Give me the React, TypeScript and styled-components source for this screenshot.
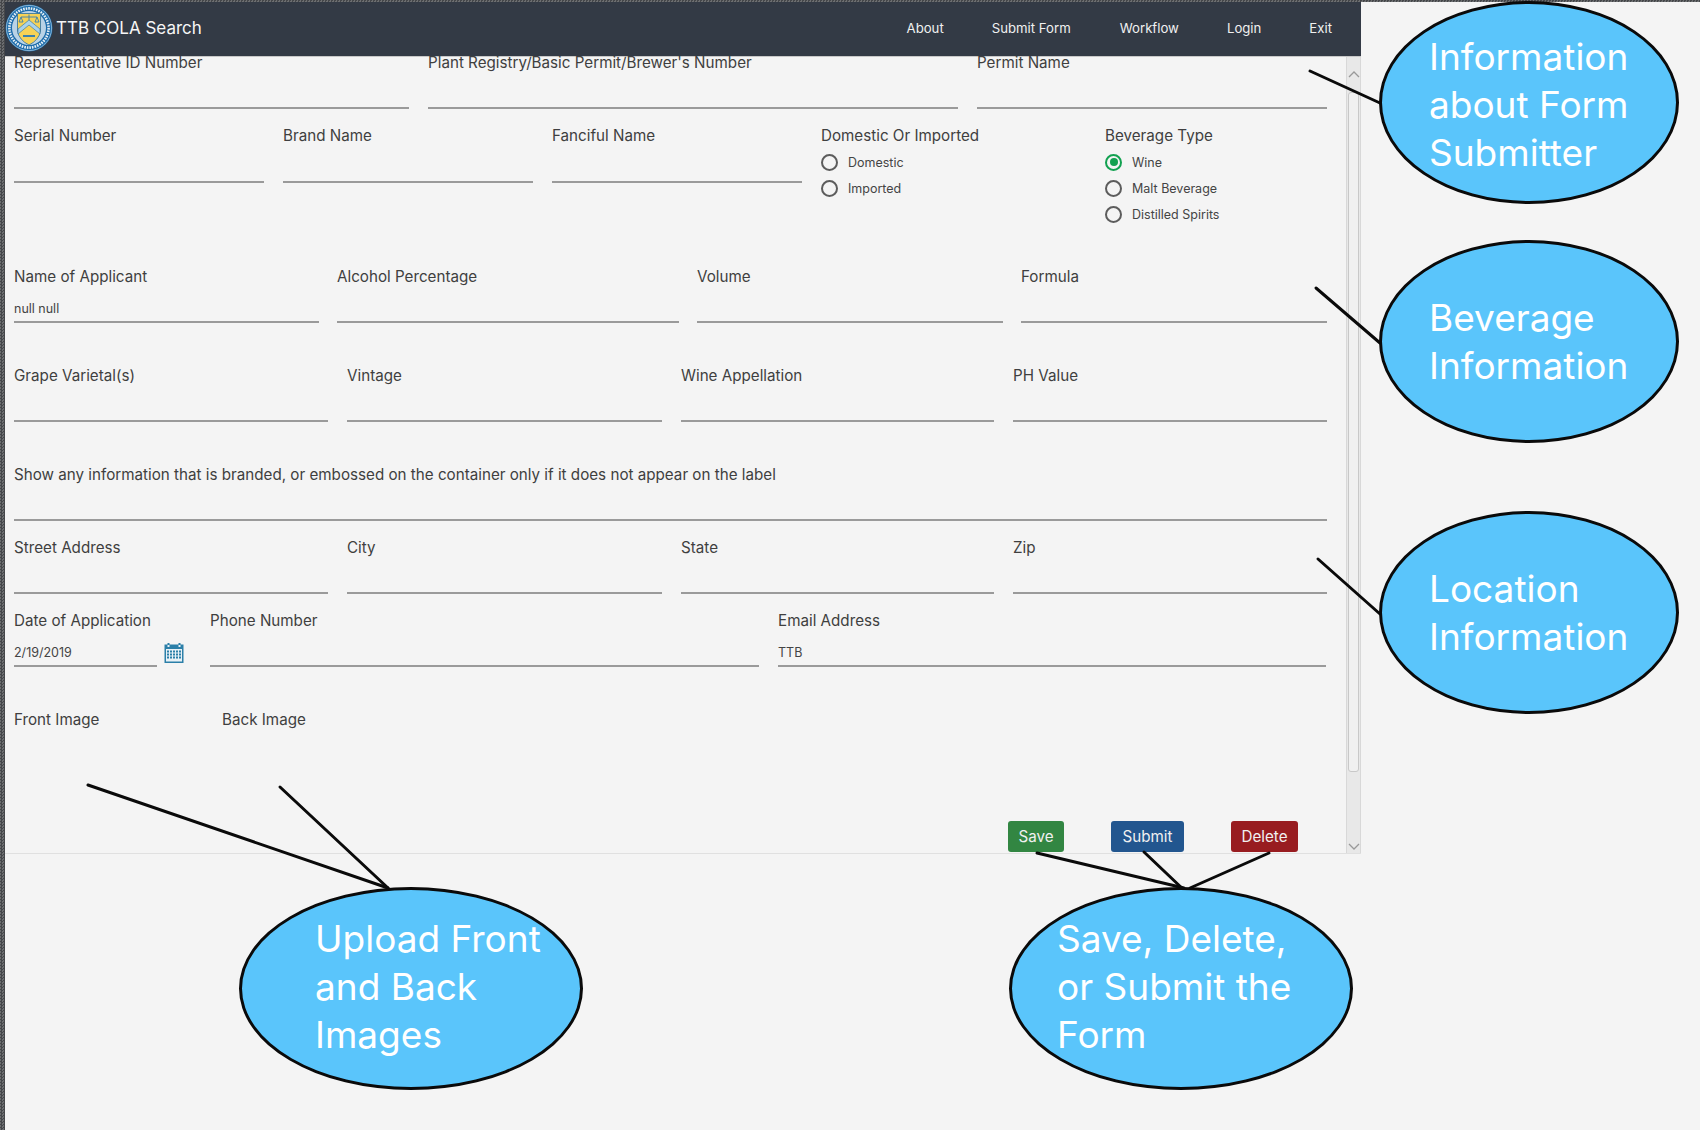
import styled, { createGlobalStyle } from "styled-components"

const GlobalStyle = createGlobalStyle`
    html, body {
        margin: 0;
        padding: 0;
        width: 1700px;
        height: 1130px;
        overflow: hidden;
        background: #f4f4f4;
        font-family: Inter, "Liberation Sans", sans-serif;
    }
`

// the reference has a transparency checker showing along the top and left edge
const Page = styled.div`
    width: 1700px;
    height: 1130px;
    box-sizing: border-box;
    padding: 2px 0 0 5px;
    display: flex;
    background: repeating-conic-gradient(#45474a 0 25%, #6c6e70 0 50%) 0 0 / 3px 3px;
`

const Canvas = styled.div`
    position: relative;
    flex: 1;
    background: #f4f4f4;
`

const Window = styled.div`
    width: 1356px;
    height: 851px;
    display: flex;
    flex-direction: column;
    border-bottom: 1px solid #e0e0e0;
`

const NavBar = styled.header`
    height: 55px;
    flex: none;
    display: flex;
    align-items: center;
    background: #333a45;
    color: #f4f4f4;
    border-bottom: 1px solid #c8c8c8;
    box-sizing: border-box;
    padding-bottom: 2px;
`

const Brand = styled.div`
    display: flex;
    align-items: center;
    gap: 3px;
    flex: 1;
    font-size: 17px;
    color: #f6f6f6;
`

const NavLink = styled.a<{ $gap: number }>`
    font-size: 13.2px;
    color: #f0f0f0;
    margin-right: ${({ $gap }) => $gap}px;
`

const Body = styled.div`
    flex: 1;
    display: flex;
    min-height: 0;
`

const Form = styled.form`
    flex: 1;
    box-sizing: border-box;
    padding: 0 19px 0 9px;
    position: relative;
`

const Row = styled.div<{ $cols: string; $height: number; $gap?: number }>`
    display: grid;
    grid-template-columns: ${({ $cols }) => $cols};
    column-gap: ${({ $gap }) => $gap ?? 19}px;
    height: ${({ $height }) => $height}px;
`

const Field = styled.div<{ $line?: number }>`
    height: ${({ $line }) => $line ?? 52}px;
    box-sizing: border-box;
    border-bottom: 2px solid #9a9a9a;
    position: relative;
`

const Label = styled.div`
    font-size: 15.2px;
    line-height: 18px;
    margin-top: -3px;
    color: #3f3f3f;
    white-space: nowrap;
`

const Value = styled.div`
    font-size: 12.5px;
    color: #444;
    position: absolute;
    left: 0;
    bottom: 5px;
`

const Group = styled.div`
    display: flex;
    flex-direction: column;
`

const RadioRow = styled.div`
    display: flex;
    align-items: center;
    height: 26px;
    gap: 10px;
    font-size: 12.5px;
    color: #444;
`

const RadioGroup = styled.div`
    margin-top: 4px;
`

const Radio = styled.span<{ $on?: boolean }>`
    width: 17px;
    height: 17px;
    box-sizing: border-box;
    border-radius: 50%;
    border: 2px solid ${({ $on }) => ($on ? "#12a150" : "#5c5c5c")};
    display: flex;
    align-items: center;
    justify-content: center;
    &::after {
        content: "";
        display: ${({ $on }) => ($on ? "block" : "none")};
        width: 8px;
        height: 8px;
        border-radius: 50%;
        background: #12a150;
    }
`

const DateWrap = styled.div`
    display: flex;
    align-items: flex-end;
    gap: 7px;
    margin-top: 3px;
`

const DateField = styled(Field)`
    width: 143px;
    flex: none;
`

const CalendarSlot = styled.span`
    display: flex;
    margin-bottom: 4px;
`

const Actions = styled.div`
    display: flex;
    height: 31px;
    margin: 0 29px 0 0;
    justify-content: flex-end;
    gap: 47px;
`

const Action = styled.button<{ $bg: string; $width: number }>`
    width: ${({ $width }) => $width}px;
    height: 31px;
    border: none;
    padding: 0;
    border-radius: 3px;
    background: ${({ $bg }) => $bg};
    color: #f0f0f0;
    font-family: inherit;
    font-size: 15.2px;
`

const Scroll = styled.div`
    width: 15px;
    flex: none;
    display: flex;
    flex-direction: column;
    align-items: center;
    background: #e8e8e8;
    border-left: 1px solid #d8d8d8;
    border-right: 1px solid #d8d8d8;
    box-sizing: border-box;
`

const ScrollArrow = styled.div<{ $height: number }>`
    height: ${({ $height }) => $height}px;
    flex: none;
    display: flex;
    align-items: center;
    color: #999;
`

const ScrollThumb = styled.div`
    width: 11px;
    height: 680px;
    flex: none;
    background: #f0f0f0;
    border: 1px solid #c8c8c8;
    border-radius: 3px;
    box-sizing: border-box;
`

const ScrollGap = styled.div`
    flex: 1;
`

const Bubble = styled.div<{ $x: number; $y: number; $w: number; $pad: number; $shift?: number }>`
    position: absolute;
    left: ${({ $x }) => $x - 5}px;
    top: ${({ $y }) => $y - 2}px;
    width: ${({ $w }) => $w}px;
    height: 203px;
    box-sizing: border-box;
    padding-left: ${({ $pad }) => $pad}px;
    padding-top: ${({ $shift }) => Math.max($shift ?? 0, 0)}px;
    padding-bottom: ${({ $shift }) => Math.max(-($shift ?? 0), 0)}px;
    display: flex;
    flex-direction: column;
    justify-content: center;
    border: 3px solid #0a0a0a;
    border-radius: 50%;
    background: #5ac5fb;
    color: #fff;
    font-size: 37px;
    line-height: 48px;
    white-space: nowrap;
`

const Leaders = styled.svg`
    position: absolute;
    left: -5px;
    top: -2px;
    pointer-events: none;
`

function Seal() {
    return (
        <svg width="48" height="48" viewBox="0 0 48 48">
            <circle cx="24" cy="24" r="23.5" fill="#1c6cab" />
            <circle cx="24" cy="24" r="22.6" fill="none" stroke="#cfe2ef" strokeWidth="0.6" />
            <circle cx="24" cy="24" r="19.6" fill="none" stroke="#e6f0f6" strokeWidth="2.6" strokeDasharray="1.6 1" />
            <circle cx="24" cy="24" r="17" fill="#b9d3e6" />
            <path d="M12.5 9.5 H35.5 V27 Q34 36 24 41 Q14 36 12.5 27 Z" fill="#f6d256" stroke="#2a6f9f" strokeWidth="0.8" />
            <path d="M13 25 L24 16 L35 25 V30 L24 21 L13 30 Z" fill="#a9d2ea" stroke="#2a6f9f" strokeWidth="0.6" />
            <path d="M16 13 H32 M24 10.5 V16 M16 13 L14 18 H18 Z M32 13 L30 18 H34 Z" fill="none" stroke="#3a80ad" strokeWidth="0.9" />
            <rect x="18" y="31" width="12" height="2" fill="#3a80ad" />
        </svg>
    )
}

function CalendarIcon() {
    return (
        <svg width="20" height="20" viewBox="0 0 20 20">
            <rect x="0.5" y="1.5" width="19" height="18.5" fill="#2b7fa8" />
            <rect x="2" y="6" width="16" height="12.5" fill="#e8f1f6" />
            <rect x="3.5" y="0" width="2" height="2.5" fill="#2b7fa8" />
            <rect x="14.5" y="0" width="2" height="2.5" fill="#2b7fa8" />
            <rect x="3.5" y="2" width="2" height="2" fill="#e8f1f6" />
            <rect x="14.5" y="2" width="2" height="2" fill="#e8f1f6" />
            {[7.5, 10.5, 13.5].map((y) =>
                [3, 6, 9, 12, 15].map((x) => (
                    <rect key={`${x}-${y}`} x={x} y={y} width="2" height="2" fill="#2b7fa8" />
                ))
            )}
        </svg>
    )
}

const COLS_4 = "314px 315px 313px 314px"

function App() {
    return (
        <>
            <GlobalStyle />
            <Page>
                <Canvas>
                    <Window>
                        <NavBar>
                            <Brand>
                                <Seal />
                                TTB COLA Search
                            </Brand>
                            <NavLink $gap={48}>About</NavLink>
                            <NavLink $gap={49}>Submit Form</NavLink>
                            <NavLink $gap={48}>Workflow</NavLink>
                            <NavLink $gap={48}>Login</NavLink>
                            <NavLink $gap={29}>Exit</NavLink>
                        </NavBar>
                        <Body>
                            <Form>
                                <Row $cols="395px 530px 350px" $height={73}>
                                    <Field><Label>Representative ID Number</Label></Field>
                                    <Field><Label>Plant Registry/Basic Permit/Brewer's Number</Label></Field>
                                    <Field><Label>Permit Name</Label></Field>
                                </Row>
                                <Row $cols="250px 250px 250px 265px 1fr" $height={141}>
                                    <Field $line={53}><Label>Serial Number</Label></Field>
                                    <Field $line={53}><Label>Brand Name</Label></Field>
                                    <Field $line={53}><Label>Fanciful Name</Label></Field>
                                    <Group>
                                        <Label>Domestic Or Imported</Label>
                                        <RadioGroup>
                                            <RadioRow><Radio />Domestic</RadioRow>
                                            <RadioRow><Radio />Imported</RadioRow>
                                        </RadioGroup>
                                    </Group>
                                    <Group>
                                        <Label>Beverage Type</Label>
                                        <RadioGroup>
                                            <RadioRow><Radio $on />Wine</RadioRow>
                                            <RadioRow><Radio />Malt Beverage</RadioRow>
                                            <RadioRow><Radio />Distilled Spirits</RadioRow>
                                        </RadioGroup>
                                    </Group>
                                </Row>
                                <Row $cols="305px 342px 306px 306px" $height={99} $gap={18}>
                                    <Field><Label>Name of Applicant</Label><Value>null null</Value></Field>
                                    <Field><Label>Alcohol Percentage</Label></Field>
                                    <Field><Label>Volume</Label></Field>
                                    <Field><Label>Formula</Label></Field>
                                </Row>
                                <Row $cols={COLS_4} $height={99}>
                                    <Field><Label>Grape Varietal(s)</Label></Field>
                                    <Field><Label>Vintage</Label></Field>
                                    <Field><Label>Wine Appellation</Label></Field>
                                    <Field><Label>PH Value</Label></Field>
                                </Row>
                                <Row $cols="1fr" $height={73}>
                                    <Field><Label>Show any information that is branded, or embossed on the container only if it does not appear on the label</Label></Field>
                                </Row>
                                <Row $cols={COLS_4} $height={73}>
                                    <Field><Label>Street Address</Label></Field>
                                    <Field><Label>City</Label></Field>
                                    <Field><Label>State</Label></Field>
                                    <Field><Label>Zip</Label></Field>
                                </Row>
                                <Row $cols="177px 549px 548px" $height={99}>
                                    <Group>
                                        <Label>Date of Application</Label>
                                        <DateWrap>
                                            <DateField $line={34}><Value>2/19/2019</Value></DateField>
                                            <CalendarSlot><CalendarIcon /></CalendarSlot>
                                        </DateWrap>
                                    </Group>
                                    <Field><Label>Phone Number</Label></Field>
                                    <Field><Label>Email Address</Label><Value>TTB</Value></Field>
                                </Row>
                                <Row $cols="208px 200px" $height={107} $gap={0}>
                                    <Label>Front Image</Label>
                                    <Label>Back Image</Label>
                                </Row>
                                <Actions>
                                    <Action type="button" $bg="#328642" $width={56}>Save</Action>
                                    <Action type="button" $bg="#22568f" $width={73}>Submit</Action>
                                    <Action type="button" $bg="#981c20" $width={67}>Delete</Action>
                                </Actions>
                            </Form>
                            <Scroll>
                                <ScrollArrow $height={35}>
                                    <svg width="12" height="7" viewBox="0 0 12 7"><path d="M1 6 L6 1 L11 6" fill="none" stroke="currentColor" strokeWidth="1.3" /></svg>
                                </ScrollArrow>
                                <ScrollThumb />
                                <ScrollGap />
                                <ScrollArrow $height={14}>
                                    <svg width="12" height="7" viewBox="0 0 12 7"><path d="M1 1 L6 6 L11 1" fill="none" stroke="currentColor" strokeWidth="1.3" /></svg>
                                </ScrollArrow>
                            </Scroll>
                        </Body>
                    </Window>
                    <Leaders width="1700" height="1130" viewBox="0 0 1700 1130">
                        <g stroke="#0a0a0a" strokeWidth="3" strokeLinecap="round">
                            <line x1="1310" y1="71" x2="1380" y2="103" />
                            <line x1="1316" y1="288" x2="1380" y2="343" />
                            <line x1="1318" y1="559" x2="1380" y2="614" />
                            <line x1="88" y1="785" x2="388" y2="888" />
                            <line x1="280" y1="787" x2="388" y2="888" />
                            <line x1="1037" y1="853" x2="1184" y2="888" />
                            <line x1="1144" y1="852" x2="1185" y2="891" />
                            <line x1="1269" y1="853" x2="1190" y2="888" />
                        </g>
                    </Leaders>
                    <Bubble $x={1379} $y={1} $w={300} $pad={47} $shift={4}>
                        <div>Information</div><div>about Form</div><div>Submitter</div>
                    </Bubble>
                    <Bubble $x={1379} $y={240} $w={300} $pad={47}>
                        <div>Beverage</div><div>Information</div>
                    </Bubble>
                    <Bubble $x={1379} $y={511} $w={300} $pad={47}>
                        <div>Location</div><div>Information</div>
                    </Bubble>
                    <Bubble $x={239} $y={887} $w={344} $pad={73} $shift={-4}>
                        <div>Upload Front</div><div>and Back</div><div>Images</div>
                    </Bubble>
                    <Bubble $x={1009} $y={887} $w={344} $pad={45} $shift={-4}>
                        <div>Save, Delete,</div><div>or Submit the</div><div>Form</div>
                    </Bubble>
                </Canvas>
            </Page>
        </>
    )
}

export default App
